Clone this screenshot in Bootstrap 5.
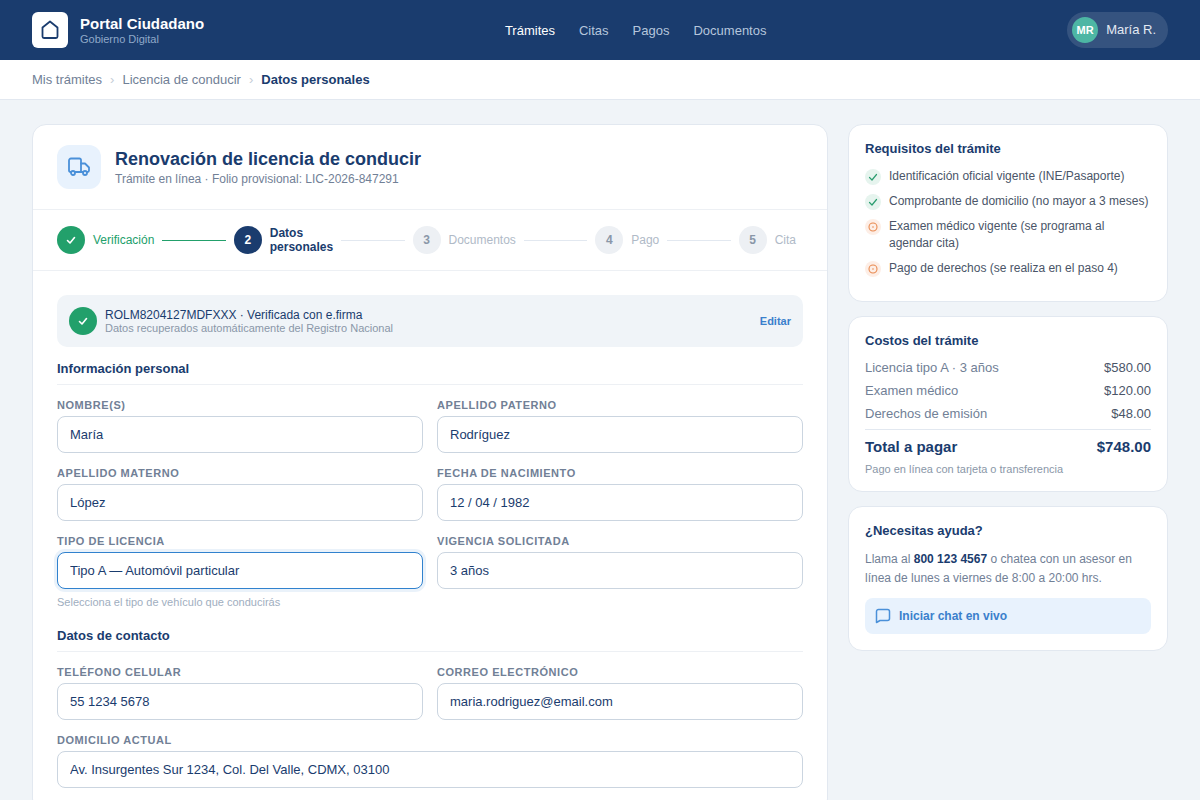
<!DOCTYPE html>
<html lang="es">
<head>
  <meta charset="UTF-8">
  <title>Portal Ciudadano</title>
  <meta name="viewport" content="width=device-width, initial-scale=1">
  <link href="https://cdn.jsdelivr.net/npm/bootstrap@5.3.3/dist/css/bootstrap.min.css" rel="stylesheet">
  <style>
    body {
      font-family: "Liberation Sans", Arial, sans-serif;
      background: #f0f4f8;
      color: #1a3c6e;
      font-size: 13px;
    }

    /* header */
    .top-bar { height: 60px; background: #1a3c6e; padding: 0 32px; }
    .brand-wrap { gap: 12px; }
    .logo-box { width: 36px; height: 36px; background: #fff; border-radius: 6px; }
    .brand-name { font-size: 15px; font-weight: 700; color: #fff; line-height: 18px; padding-top: 1px; }
    .brand-sub { font-size: 11px; color: #90a9c9; line-height: 13px; }
    .top-links { gap: 24px; padding-top: 2px; }
    .top-links a { font-size: 13px; line-height: 20px; color: #b5c6dc; text-decoration: none; }
    .top-links a.current { color: #fff; }
    .user-pill { height: 36px; border-radius: 18px; background: rgba(255,255,255,.12); padding: 0 12px 0 5px; gap: 8px; color: #e3e9f2; }
    .user-dot { width: 26px; height: 26px; border-radius: 50%; background: #4db6a4; color: #fff; font-size: 11px; font-weight: 700; }

    /* breadcrumb */
    .crumbs { height: 40px; background: #fff; border-bottom: 1px solid #e2e8f0; padding: 0 32px; gap: 8px; color: #718096; }
    .crumbs .sep { color: #c5cdd8; font-size: 13px; line-height: 16px; }
    .crumbs .here { color: #1a3c6e; font-weight: 700; }

    /* page */
    .page-wrap { padding: 24px 32px; gap: 20px; align-items: flex-start; }
    .main-col { width: 796px; flex: none; }
    .side-col { width: 320px; flex: none; gap: 14px; }
    .panel { background: #fff; border: 1px solid #e2e8f0; border-radius: 14px; }

    .panel-head { padding: 20px 24px; gap: 14px; border-bottom: 1px solid #edf0f4; }
    .head-icon { width: 44px; height: 44px; border-radius: 12px; background: #e8f2fd; }
    .head-title { font-size: 18px; font-weight: 700; line-height: 22px; color: #1a3c6e; margin: 0; }
    .head-sub { font-size: 12px; line-height: 14px; color: #718096; margin-top: 2px; }

    /* stepper */
    .stepper { padding: 16px 31px 16px 24px; height: 61px; gap: 8px; border-bottom: 1px solid #edf0f4; }
    .step-dot { width: 28px; height: 28px; border-radius: 50%; flex: none; background: #edf0f4; color: #8a97a8; font-size: 12px; font-weight: 700; }
    .step-dot.done { background: #22a06b; color: #fff; }
    .step-dot.active { background: #1a3c6e; color: #fff; }
    .step-text { font-size: 12px; line-height: 14px; color: #b0bac7; }
    .step-text.done { color: #22a06b; }
    .step-text.active { color: #1a3c6e; font-weight: 700; }
    .step-line { flex: 1; height: 1px; background: #e2e8f0; }
    .step-line.done { background: #22a06b; }

    /* form */
    .form-body { padding: 24px; }
    .verify-box { height: 52px; background: #f0f4f8; border-radius: 10px; padding: 0 12px; gap: 8px; margin-bottom: 14px; }
    .verify-main { font-size: 12px; line-height: 14px; color: #1a3c6e; }
    .verify-sub { font-size: 11px; line-height: 13px; color: #8a97a8; }
    .verify-edit { font-size: 11px; font-weight: 700; color: #3a80cc; text-decoration: none; }
    .section-name { font-size: 13px; font-weight: 700; line-height: 15px; color: #1a3c6e; padding-bottom: 8px; border-bottom: 1px solid #edf0f4; margin-bottom: 14px; }
    .section-next { margin-top: 20px; }
    .field-grid { display: grid; grid-template-columns: 1fr 1fr; gap: 14px; }
    .field-wide { grid-column: 1 / 3; }
    .field-label { display: block; font-size: 11px; font-weight: 700; line-height: 13px; letter-spacing: .55px; text-transform: uppercase; color: #718096; margin-bottom: 4px; }
    .field-input.form-control { height: 37px; font-size: 13px; color: #1a3c6e; border: 1px solid #cbd5e0; border-radius: 8px; padding: 0 12px; }
    .field-input.field-on.form-control { border-color: #3182ce; box-shadow: 0 0 0 3px rgba(49,130,206,.1); }
    .field-hint { font-size: 11px; line-height: 12px; color: #a0aec0; margin-top: 7px; }

    /* side */
    .side-box { padding: 16px; }
    .side-title { font-size: 13px; font-weight: 700; line-height: 15px; color: #1a3c6e; margin-bottom: 12px; }
    .req-item { gap: 8px; font-size: 12px; line-height: 17px; color: #4a5568; margin-bottom: 8px; }
    .req-icon { width: 16px; height: 16px; border-radius: 50%; flex: none; margin-top: 1px; }
    .req-icon.ok { background: #e6f4ee; }
    .req-icon.wait { background: #fdeee6; }
    .cost-row { font-size: 13px; line-height: 15px; color: #718096; margin-bottom: 8px; }
    .cost-row b { font-weight: 400; color: #4a5568; }
    .cost-total { border-top: 1px solid #e2e8f0; padding-top: 8px; font-size: 15px; font-weight: 700; line-height: 17px; color: #1a3c6e; }
    .cost-note { font-size: 11px; line-height: 12px; color: #8a97a8; margin-top: 8px; }
    .help-text { font-size: 12px; line-height: 19px; color: #718096; margin-bottom: 10px; }
    .help-text strong { color: #1a3c6e; }
    .chat-btn.btn { height: 36px; background: #e8f2fd; border: 0; border-radius: 8px; padding: 0 10px; gap: 8px; font-size: 12px; font-weight: 700; color: #3a80cc; }
  </style>
</head>
<body>

  <header class="top-bar d-flex align-items-center justify-content-between">
    <div class="d-flex align-items-center brand-wrap">
      <div class="logo-box d-flex align-items-center justify-content-center">
        <svg width="22" height="22" viewBox="0 0 22 22" fill="none" stroke="#1a3c6e" stroke-width="1.8" stroke-linejoin="round"><path d="M11 2.500 18.500 8.500V17.500A1.500 1.500 0 0 1 17 19H5A1.500 1.500 0 0 1 3.500 17.500V8.500Z"/></svg>
      </div>
      <div>
        <div class="brand-name">Portal Ciudadano</div>
        <div class="brand-sub">Gobierno Digital</div>
      </div>
    </div>
    <nav class="top-links d-flex">
      <a class="current" href="#">Trámites</a>
      <a href="#">Citas</a>
      <a href="#">Pagos</a>
      <a href="#">Documentos</a>
    </nav>
    <div class="user-pill d-flex align-items-center">
      <div class="user-dot d-flex align-items-center justify-content-center">MR</div>
      <span>María R.</span>
    </div>
  </header>

  <div class="crumbs d-flex align-items-center">
    <span>Mis trámites</span><span class="sep">›</span>
    <span>Licencia de conducir</span><span class="sep">›</span>
    <span class="here">Datos personales</span>
  </div>

  <div class="page-wrap d-flex">
    <main class="main-col panel">
      <div class="panel-head d-flex align-items-center">
        <div class="head-icon d-flex align-items-center justify-content-center">
          <svg width="24" height="24" viewBox="0 0 24 24" fill="none" stroke="#4a90d9" stroke-width="1.8" stroke-linejoin="round" stroke-linecap="round"><path d="M3.800 17H3.500A1.500 1.500 0 0 1 2 15.500V5.500A2 2 0 0 1 4 3.500H12.500A1.500 1.500 0 0 1 14 5V17H8"/><path d="M14 8.500H18L22 12.500V15.500A1.500 1.500 0 0 1 20.500 17H20"/><path d="M16 17H14"/><circle cx="6" cy="18" r="2"/><circle cx="18" cy="18" r="2"/></svg>
        </div>
        <div>
          <h1 class="head-title">Renovación de licencia de conducir</h1>
          <div class="head-sub">Trámite en línea · Folio provisional: LIC-2026-847291</div>
        </div>
      </div>

      <div class="stepper d-flex align-items-center">
        <div class="step-dot done d-flex align-items-center justify-content-center">
          <svg width="12" height="12" viewBox="0 0 12 12" fill="none" stroke="#fff" stroke-width="1.6" stroke-linecap="round" stroke-linejoin="round"><path d="M2.500 6.500 5 9l4.500-5.500"/></svg>
        </div>
        <div class="step-text done">Verificación</div>
        <div class="step-line done"></div>
        <div class="step-dot active d-flex align-items-center justify-content-center">2</div>
        <div class="step-text active">Datos<br>personales</div>
        <div class="step-line"></div>
        <div class="step-dot d-flex align-items-center justify-content-center">3</div>
        <div class="step-text">Documentos</div>
        <div class="step-line"></div>
        <div class="step-dot d-flex align-items-center justify-content-center">4</div>
        <div class="step-text">Pago</div>
        <div class="step-line"></div>
        <div class="step-dot d-flex align-items-center justify-content-center">5</div>
        <div class="step-text">Cita</div>
      </div>

      <div class="form-body">
        <div class="verify-box d-flex align-items-center">
          <div class="step-dot done d-flex align-items-center justify-content-center">
            <svg width="12" height="12" viewBox="0 0 12 12" fill="none" stroke="#fff" stroke-width="1.6" stroke-linecap="round" stroke-linejoin="round"><path d="M2.500 6.500 5 9l4.500-5.500"/></svg>
          </div>
          <div class="flex-grow-1">
            <div class="verify-main">ROLM8204127MDFXXX · Verificada con e.firma</div>
            <div class="verify-sub">Datos recuperados automáticamente del Registro Nacional</div>
          </div>
          <a class="verify-edit" href="#">Editar</a>
        </div>

        <div class="section-name">Información personal</div>
        <div class="field-grid">
          <div><label class="field-label">Nombre(s)</label><input class="form-control field-input" value="María"></div>
          <div><label class="field-label">Apellido paterno</label><input class="form-control field-input" value="Rodríguez"></div>
          <div><label class="field-label">Apellido materno</label><input class="form-control field-input" value="López"></div>
          <div><label class="field-label">Fecha de nacimiento</label><input class="form-control field-input" value="12 / 04 / 1982"></div>
          <div>
            <label class="field-label">Tipo de licencia</label><input class="form-control field-input field-on" value="Tipo A — Automóvil particular">
            <div class="field-hint">Selecciona el tipo de vehículo que conducirás</div>
          </div>
          <div><label class="field-label">Vigencia solicitada</label><input class="form-control field-input" value="3 años"></div>
        </div>

        <div class="section-name section-next">Datos de contacto</div>
        <div class="field-grid">
          <div><label class="field-label">Teléfono celular</label><input class="form-control field-input" value="55 1234 5678"></div>
          <div><label class="field-label">Correo electrónico</label><input class="form-control field-input" value="maria.rodriguez@email.com"></div>
          <div class="field-wide"><label class="field-label">Domicilio actual</label><input class="form-control field-input" value="Av. Insurgentes Sur 1234, Col. Del Valle, CDMX, 03100"></div>
        </div>
      </div>
    </main>

    <aside class="side-col d-flex flex-column">
      <div class="panel side-box">
        <div class="side-title">Requisitos del trámite</div>
        <div class="req-item d-flex">
          <span class="req-icon ok d-flex align-items-center justify-content-center"><svg width="12" height="12" viewBox="0 0 12 12" fill="none" stroke="#2a9d6f" stroke-width="1.2" stroke-linecap="round" stroke-linejoin="round"><path d="M2.500 6.500 5 9l4.500-5.500"/></svg></span>
          <span>Identificación oficial vigente (INE/Pasaporte)</span>
        </div>
        <div class="req-item d-flex">
          <span class="req-icon ok d-flex align-items-center justify-content-center"><svg width="12" height="12" viewBox="0 0 12 12" fill="none" stroke="#2a9d6f" stroke-width="1.2" stroke-linecap="round" stroke-linejoin="round"><path d="M2.500 6.500 5 9l4.500-5.500"/></svg></span>
          <span>Comprobante de domicilio (no mayor a 3 meses)</span>
        </div>
        <div class="req-item d-flex">
          <span class="req-icon wait d-flex align-items-center justify-content-center"><svg width="12" height="12" viewBox="0 0 12 12" fill="none" stroke="#e8894f" stroke-width="1.1"><circle cx="6" cy="6" r="4"/><circle cx="6" cy="6" r=".8" fill="#e8894f" stroke="none"/></svg></span>
          <span>Examen médico vigente (se programa al agendar cita)</span>
        </div>
        <div class="req-item d-flex">
          <span class="req-icon wait d-flex align-items-center justify-content-center"><svg width="12" height="12" viewBox="0 0 12 12" fill="none" stroke="#e8894f" stroke-width="1.1"><circle cx="6" cy="6" r="4"/><circle cx="6" cy="6" r=".8" fill="#e8894f" stroke="none"/></svg></span>
          <span>Pago de derechos (se realiza en el paso 4)</span>
        </div>
      </div>

      <div class="panel side-box">
        <div class="side-title">Costos del trámite</div>
        <div class="cost-row d-flex justify-content-between"><span>Licencia tipo A · 3 años</span><b>$580.00</b></div>
        <div class="cost-row d-flex justify-content-between"><span>Examen médico</span><b>$120.00</b></div>
        <div class="cost-row d-flex justify-content-between"><span>Derechos de emisión</span><b>$48.00</b></div>
        <div class="cost-total d-flex justify-content-between"><span>Total a pagar</span><span>$748.00</span></div>
        <div class="cost-note">Pago en línea con tarjeta o transferencia</div>
      </div>

      <div class="panel side-box">
        <div class="side-title">¿Necesitas ayuda?</div>
        <div class="help-text">Llama al <strong>800 123 4567</strong> o chatea con un asesor en línea de lunes a viernes de 8:00 a 20:00 hrs.</div>
        <button class="btn chat-btn d-flex align-items-center w-100">
          <svg width="16" height="16" viewBox="0 0 16 16" fill="none" stroke="#4a90d9" stroke-width="1.5" stroke-linejoin="round"><path d="M1.500 3.500A2 2 0 0 1 3.500 1.500H12.500A2 2 0 0 1 14.500 3.500V10.500A2 2 0 0 1 12.500 12.500H5L1.500 14.500Z"/></svg>
          Iniciar chat en vivo
        </button>
      </div>
    </aside>
  </div>

</body>
</html>
